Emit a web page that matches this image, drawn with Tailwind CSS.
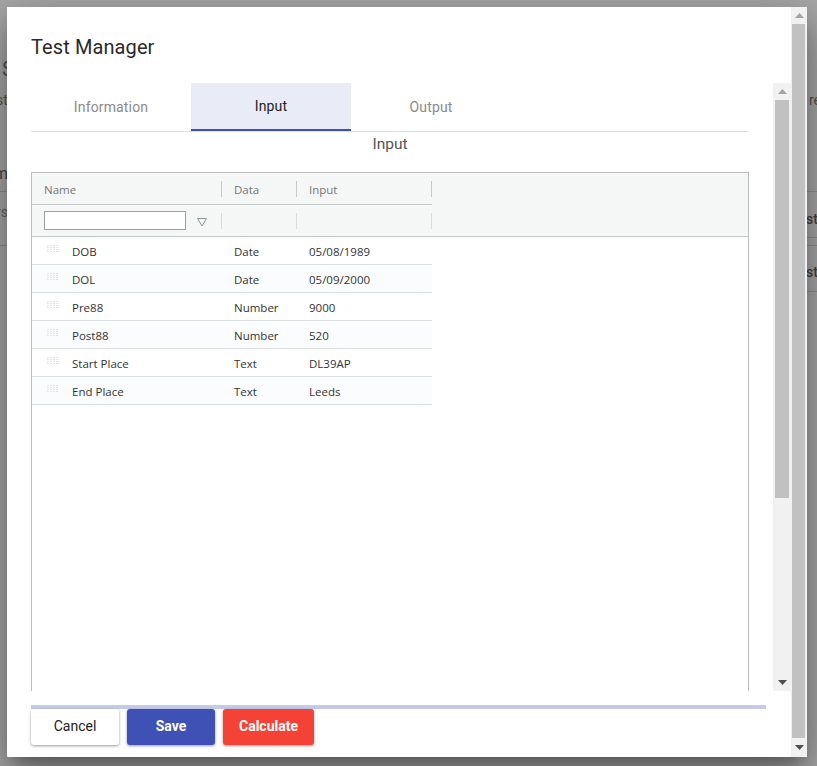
<!DOCTYPE html>
<html lang="en">
  <head>
    <meta charset="UTF-8" />
    <title>Test Manager</title>
    <script src="https://cdn.jsdelivr.net/npm/@tailwindcss/browser@4"></script>
  </head>
  <body class="m-0 overflow-hidden">
    <div class="relative w-[817px] h-[766px] overflow-hidden bg-[#a9a9a9] font-['Roboto',sans-serif]">
      <!-- page behind the dialog -->
      <span class="absolute left-[2px] top-[57px] text-[20px] leading-[24px] text-[#555]">S</span>
      <span class="absolute left-[-4px] top-[91px] text-[14px] leading-[18px] text-[#555]">st</span>
      <span class="absolute left-[-6px] top-[164px] text-[16px] leading-[20px] text-[#444]">m</span>
      <div class="absolute left-0 top-[191px] w-[7px] h-px bg-[#8f8f8f]"></div>
      <span class="absolute left-[-4px] top-[203px] text-[14px] leading-[18px] text-[#666]">rs</span>
      <div class="absolute left-0 top-[245px] w-[7px] h-px bg-[#8f8f8f]"></div>
      <span class="absolute left-[809px] top-[91px] text-[14px] leading-[18px] text-[#555]">re</span>
      <div class="absolute left-[807px] top-[191px] w-[10px] h-px bg-[#8f8f8f]"></div>
      <span class="absolute left-[806px] top-[210px] text-[14px] font-medium leading-[18px] text-[#444]">st</span>
      <div class="absolute left-[807px] top-[237px] w-[10px] h-px bg-[#8f8f8f]"></div>
      <div class="absolute left-[807px] top-[245px] w-[10px] h-px bg-[#8f8f8f]"></div>
      <span class="absolute left-[806px] top-[263px] text-[14px] font-medium leading-[18px] text-[#444]">st</span>
      <div class="absolute left-[807px] top-[291px] w-[10px] h-px bg-[#8f8f8f]"></div>

      <!-- dialog -->
      <div class="absolute left-[7px] top-[7px] w-[800px] h-[750px] flex bg-white shadow-[0_11px_15px_-7px_rgba(0,0,0,0.3),0_24px_38px_3px_rgba(0,0,0,0.2),0_9px_46px_8px_rgba(0,0,0,0.18)]">
        <div class="w-[784px] flex flex-col">
          <h2 class="h-[76px] pl-6 pt-[27px] text-[20px] leading-[26px] font-[450] text-[#2a2a2a] tracking-[0.1px]">Test Manager</h2>

          <div class="h-[608px] flex">
            <div class="w-[766px] pl-6 pr-[24px] overflow-hidden">
              <div class="w-[718px] h-[49px] flex border-b border-[#e0e0e0]">
                <div class="w-40 h-12 flex items-center justify-center text-[14px] font-[450] tracking-[0.15px] text-[#8a8a8a]">Information</div>
                <div class="w-40 h-[48px] flex items-center justify-center pt-px text-[14px] font-[450] tracking-[0.15px] text-[#212121] bg-[#e9ecf6] border-b-2 border-[#3f51a5]">Input</div>
                <div class="w-40 h-12 flex items-center justify-center text-[14px] font-[450] tracking-[0.15px] text-[#8a8a8a]">Output</div>
              </div>
              <p class="h-[40px] pt-[2px] text-center text-[15.5px] leading-[20px] text-[#555]">Input</p>

              <!-- grid -->
              <div class="w-[718px] h-[560px] border border-[#bdbdbd] font-['Open_Sans',sans-serif] text-[11.5px] text-[#333]">
                <div class="bg-[#f5f7f7] h-[64px] border-b border-[#c4c8c8]">
                  <div class="flex w-[400px] h-[32px] border-b border-[#c4c8c8] text-[#757575]">
                    <div class="w-[190px] pl-3 flex items-center justify-between"><span class="pt-[2px]">Name</span><i class="w-px h-[16px] bg-[#c8c8c8]"></i></div>
                    <div class="w-[75px] pl-3 flex items-center justify-between"><span class="pt-[2px]">Data</span><i class="w-px h-[16px] bg-[#c8c8c8]"></i></div>
                    <div class="w-[135px] pl-3 flex items-center justify-between"><span class="pt-[2px]">Input</span><i class="w-px h-[16px] bg-[#c8c8c8]"></i></div>
                  </div>
                  <div class="flex w-[400px] h-[31px]">
                    <div class="w-[190px] pl-3 flex items-center justify-between">
                      <div class="w-[142px] h-[19px] bg-white border border-[#9e9e9e]"></div>
                      <svg width="12" height="11" viewBox="0 0 12 11" class="ml-[10px] mt-[3px]"><path d="M1.500 1.500h9L6 9z" fill="none" stroke="#8f9a96" stroke-width="1"/></svg>
                      <i class="w-px h-[16px] bg-[#dcdcdc] ml-auto"></i>
                    </div>
                    <div class="w-[75px] flex items-center justify-end"><i class="w-px h-[16px] bg-[#dcdcdc]"></i></div>
                    <div class="w-[135px] flex items-center justify-end"><i class="w-px h-[16px] bg-[#dcdcdc]"></i></div>
                  </div>
                </div>

                <div class="w-[400px]">
                  <div class="flex h-[28px] items-center pt-[2px] border-b border-[#dde0e3] bg-white">
                    <div class="w-[190px] pl-[15px] flex items-center"><svg width="12" height="8" viewBox="0 0 12 8" class="mb-[6px] mr-[13px]" stroke="#c9c9c9" stroke-dasharray="1 1"><path d="M1 0v8M4 0v8M7 0v8M10 0v8"/></svg><span>DOB</span></div>
                    <div class="w-[75px] pl-3">Date</div><div class="w-[135px] pl-3">05/08/1989</div>
                  </div>
                  <div class="flex h-[28px] items-center pt-[2px] border-b border-[#dde0e3] bg-[#fbfcfe]">
                    <div class="w-[190px] pl-[15px] flex items-center"><svg width="12" height="8" viewBox="0 0 12 8" class="mb-[6px] mr-[13px]" stroke="#c9c9c9" stroke-dasharray="1 1"><path d="M1 0v8M4 0v8M7 0v8M10 0v8"/></svg><span>DOL</span></div>
                    <div class="w-[75px] pl-3">Date</div><div class="w-[135px] pl-3">05/09/2000</div>
                  </div>
                  <div class="flex h-[28px] items-center pt-[2px] border-b border-[#dde0e3] bg-white">
                    <div class="w-[190px] pl-[15px] flex items-center"><svg width="12" height="8" viewBox="0 0 12 8" class="mb-[6px] mr-[13px]" stroke="#c9c9c9" stroke-dasharray="1 1"><path d="M1 0v8M4 0v8M7 0v8M10 0v8"/></svg><span>Pre88</span></div>
                    <div class="w-[75px] pl-3">Number</div><div class="w-[135px] pl-3">9000</div>
                  </div>
                  <div class="flex h-[28px] items-center pt-[2px] border-b border-[#dde0e3] bg-[#fbfcfe]">
                    <div class="w-[190px] pl-[15px] flex items-center"><svg width="12" height="8" viewBox="0 0 12 8" class="mb-[6px] mr-[13px]" stroke="#c9c9c9" stroke-dasharray="1 1"><path d="M1 0v8M4 0v8M7 0v8M10 0v8"/></svg><span>Post88</span></div>
                    <div class="w-[75px] pl-3">Number</div><div class="w-[135px] pl-3">520</div>
                  </div>
                  <div class="flex h-[28px] items-center pt-[2px] border-b border-[#dde0e3] bg-white">
                    <div class="w-[190px] pl-[15px] flex items-center"><svg width="12" height="8" viewBox="0 0 12 8" class="mb-[6px] mr-[13px]" stroke="#c9c9c9" stroke-dasharray="1 1"><path d="M1 0v8M4 0v8M7 0v8M10 0v8"/></svg><span>Start Place</span></div>
                    <div class="w-[75px] pl-3">Text</div><div class="w-[135px] pl-3">DL39AP</div>
                  </div>
                  <div class="flex h-[28px] items-center pt-[2px] border-b border-[#dde0e3] bg-[#fbfcfe]">
                    <div class="w-[190px] pl-[15px] flex items-center"><svg width="12" height="8" viewBox="0 0 12 8" class="mb-[6px] mr-[13px]" stroke="#c9c9c9" stroke-dasharray="1 1"><path d="M1 0v8M4 0v8M7 0v8M10 0v8"/></svg><span>End Place</span></div>
                    <div class="w-[75px] pl-3">Text</div><div class="w-[135px] pl-3">Leeds</div>
                  </div>
                </div>
              </div>
            </div>

            <!-- inner scrollbar -->
            <div class="w-[18px] h-[608px] flex flex-col bg-[#f1f1f1]">
              <div class="h-[17px] flex items-center justify-center"><svg width="9" height="5" viewBox="0 0 9 5"><path d="M4.500 0L9 5H0z" fill="#a3a3a3"/></svg></div>
              <div class="mx-[2px] w-[14px] h-[398px] bg-[#c1c1c1]"></div>
              <div class="mt-auto h-[17px] flex items-center justify-center"><svg width="9" height="5" viewBox="0 0 9 5"><path d="M0 0h9L4.500 5z" fill="#505050"/></svg></div>
            </div>
          </div>

          <div class="ml-6 mt-[14px] w-[735px] h-1 bg-[#c5cae9]"></div>
          <div class="ml-6 flex gap-2">
            <button class="w-[88px] h-9 pb-px rounded-[3px] bg-white text-[14px] font-normal text-[#212121] shadow-[0_1px_3px_rgba(0,0,0,0.4)]">Cancel</button>
            <button class="w-[88px] h-9 pb-px rounded-[3px] bg-[#3f51b5] text-[14px] font-bold text-white shadow-[0_1px_3px_rgba(0,0,0,0.4)]">Save</button>
            <button class="w-[91px] h-9 pb-px rounded-[3px] bg-[#f44336] text-[14px] font-bold text-white shadow-[0_1px_3px_rgba(0,0,0,0.4)]">Calculate</button>
          </div>
        </div>

        <!-- dialog scrollbar -->
        <div class="w-4 h-[750px] flex flex-col bg-[#f1f1f1]">
          <div class="h-[17px] flex items-center justify-center"><svg width="9" height="5" viewBox="0 0 9 5"><path d="M4.500 0L9 5H0z" fill="#a3a3a3"/></svg></div>
          <div class="mx-[1px] w-[13px] h-[714px] bg-[#c1c1c1]"></div>
          <div class="mt-auto h-[19px] flex items-center justify-center"><svg width="9" height="5" viewBox="0 0 9 5"><path d="M0 0h9L4.500 5z" fill="#505050"/></svg></div>
        </div>
      </div>
    </div>
  </body>
</html>
